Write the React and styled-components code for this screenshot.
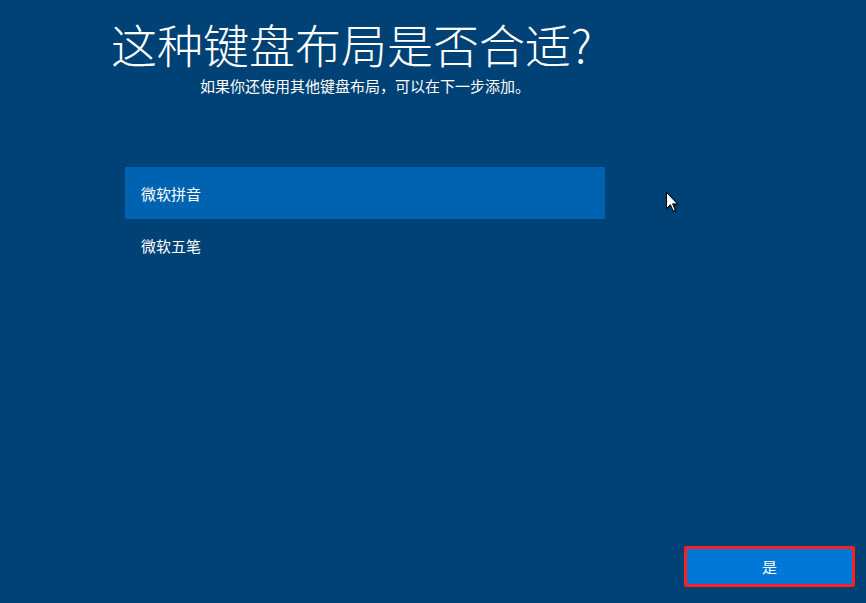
import React, { useState } from "react";
import styled, { createGlobalStyle } from "styled-components";

const GlobalStyle = createGlobalStyle`
  html, body {
    margin: 0;
    padding: 0;
    height: 100%;
    background: #004275;
  }
  #root {
    height: 100%;
  }
  * {
    box-sizing: border-box;
  }
`;

const layouts = ["微软拼音", "微软五笔"];

const App = () => {
  const [selected, setSelected] = useState(0);

  return (
    <>
      <GlobalStyle />
      <Page>
        <Content>
          <Title>这种键盘布局是否合适?</Title>
          <Column>
            <Subtitle>如果你还使用其他键盘布局，可以在下一步添加。</Subtitle>
            <List>
              {layouts.map((name, i) => (
                <Row
                  key={name}
                  $active={i === selected}
                  onClick={() => setSelected(i)}
                >
                  {name}
                </Row>
              ))}
            </List>
          </Column>
        </Content>
        <Footer>
          <YesButton>是</YesButton>
        </Footer>
        <Pointer width="12" height="20" viewBox="0 0 12 20">
          <path
            d="M0.5 0.5 V16.5 L4.4 12.7 L7.2 18.9 L9.3 18 L6.6 11.9 H11.5 Z"
            fill="#fff"
            stroke="#000"
            strokeWidth="1"
            strokeLinejoin="miter"
          />
        </Pointer>
      </Page>
    </>
  );
};

const Page = styled.div`
  position: relative;
  display: flex;
  flex-direction: column;
  min-height: 100vh;
  background: #004275;
  color: #fff;
  font-family: "Noto Sans CJK SC", "Microsoft YaHei", sans-serif;
  overflow: hidden;
`;

const Content = styled.div`
  display: flex;
  flex-direction: column;
  padding: 20px 0 0 111px;
`;

const Title = styled.h1`
  margin: 0;
  font-size: 46px;
  font-weight: 300;
  line-height: 1;
  letter-spacing: 0;
  white-space: nowrap;
`;

const Column = styled.div`
  width: 480px;
  margin-left: 14px;
  display: flex;
  flex-direction: column;
`;

const Subtitle = styled.p`
  margin: 12px 0 0;
  font-size: 15px;
  line-height: 1;
  text-align: center;
  white-space: nowrap;
`;

const List = styled.div`
  display: flex;
  flex-direction: column;
  margin-top: 74px;
`;

const Row = styled.div`
  display: flex;
  align-items: center;
  height: 52px;
  padding-left: 16px;
  font-size: 15px;
  background: ${({ $active }) => ($active ? "#0063b1" : "transparent")};
  cursor: default;
`;

const Footer = styled.div`
  margin-top: auto;
  display: flex;
  justify-content: flex-end;
  padding: 0 11px 16px 0;
`;

const YesButton = styled.button`
  width: 171px;
  height: 41px;
  border: 3px solid #ff1f1f;
  border-radius: 2px;
  background: #0078d7;
  color: #fff;
  font-family: inherit;
  font-size: 15px;
  padding: 0;
  cursor: pointer;
`;

const Pointer = styled.svg`
  position: absolute;
  left: 666px;
  top: 192px;
  filter: drop-shadow(1px 1px 1px rgba(0, 0, 0, 0.45));
  pointer-events: none;
`;

export default App;
